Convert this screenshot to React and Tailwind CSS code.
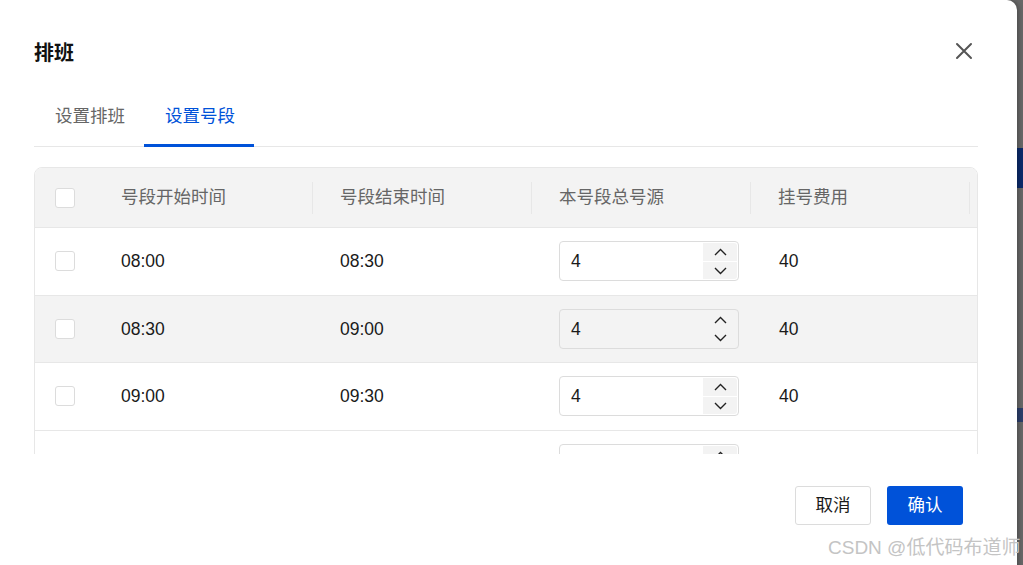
import React from 'react';

const rows = [
  { start: '08:00', end: '08:30', total: 4, fee: 40 },
  { start: '08:30', end: '09:00', total: 4, fee: 40, hover: true },
  { start: '09:00', end: '09:30', total: 4, fee: 40 },
  // last row is clipped by the scroll area, only the input's top shows
  { start: '', end: '', total: '', fee: '' },
];

const Checkbox = () => (
  <span className="block w-[20px] h-[20px] rounded-[3px] border border-[#dcdcdc] bg-white" />
);

const Chevron = ({ up }) => (
  <svg width="13" height="8" viewBox="0 0 13 8" fill="none" stroke="#222" strokeWidth="1.4">
    {up ? <path d="M1 7 L6.5 1.5 L12 7" /> : <path d="M1 1 L6.5 6.5 L12 1" />}
  </svg>
);

const InputNumber = ({ value, hover }) => (
  <div className={`flex w-[180px] h-[40px] rounded-[4px] border border-[#dcdcdc] ${hover ? 'bg-transparent' : 'bg-white'}`}>
    <span className="flex-1 flex items-center pl-[11px]">{value}</span>
    <div className="flex flex-col w-[35px] gap-px py-px pr-px">
      <span className={`flex-1 flex items-center justify-center rounded-tr-[3px] ${hover ? '' : 'bg-[#f3f3f3]'}`}>
        <Chevron up />
      </span>
      <span className={`flex-1 flex items-center justify-center rounded-br-[3px] ${hover ? '' : 'bg-[#f3f3f3]'}`}>
        <Chevron />
      </span>
    </div>
  </div>
);

const HeadCell = ({ children }) => (
  <div className="flex items-center justify-between pl-[20px] pr-[7px]">
    <span>{children}</span>
    <span className="w-px h-[32px] bg-[#e7e7e7]" />
  </div>
);

const cols = 'grid grid-cols-[66px_219px_219px_219px_219px]';

export default function App() {
  return (
    <div
      className="relative flex w-[1023px] h-[565px] overflow-hidden bg-[#686868] text-[17.5px] text-[#1a1a1a]"
      style={{ fontFamily: '"Liberation Sans", Arial, "Noto Sans CJK SC", sans-serif' }}
    >
      {/* dialog */}
      <div className="relative w-[1017px] h-[600px] shrink-0 bg-white rounded-tr-[10px] shadow-[2px_0_4px_rgba(0,0,0,0.25)]">
        {/* title */}
        <div className="flex items-center justify-between pl-[34px] pr-[44px] pt-[39px]">
          <h1 className="text-[20px] leading-[28px] font-bold text-[#111]">排班</h1>
          <svg className="-mt-[4px]" width="18" height="18" viewBox="0 0 18 18" stroke="#555" strokeWidth="2" strokeLinecap="round">
            <path d="M2 2 L16 16 M16 2 L2 16" />
          </svg>
        </div>

        {/* tabs */}
        <div className="mt-[19px] mx-[34px] w-[944px] flex h-[61px] border-b border-[#e7e7e7]">
          <div className="w-[110px] flex items-center pl-[21px] text-[#666]">设置排班</div>
          <div className="relative w-[110px] flex items-center pl-[21px] text-[#0052d9]">
            设置号段
            <span className="absolute left-0 right-0 -bottom-px h-[3px] bg-[#0052d9]" />
          </div>
        </div>

        {/* table, clipped */}
        <div className="h-[307px] overflow-hidden pt-[20px] px-[34px]">
          <div className="w-[944px] border border-[#e7e7e7] rounded-t-[8px] overflow-hidden">
            <div className={`${cols} h-[60px] bg-[#f3f3f3] border-b border-[#e7e7e7] text-[#666]`}>
              <div className="flex items-center pl-[20px]">
                <Checkbox />
              </div>
              <HeadCell>号段开始时间</HeadCell>
              <HeadCell>号段结束时间</HeadCell>
              <HeadCell>本号段总号源</HeadCell>
              <HeadCell>挂号费用</HeadCell>
            </div>
            {rows.map((r, i) => (
              <div
                key={i}
                className={`${cols} h-[67.5px] border-b border-[#e7e7e7] ${r.hover ? 'bg-[#f3f3f3]' : 'bg-white'}`}
              >
                <div className="flex items-center pl-[20px]">
                  <Checkbox />
                </div>
                <div className="flex items-center pl-[20px]">{r.start}</div>
                <div className="flex items-center pl-[20px]">{r.end}</div>
                <div className="flex items-center pl-[20px]">
                  <InputNumber value={r.total} hover={r.hover} />
                </div>
                <div className="flex items-center pl-[21px]">{r.fee}</div>
              </div>
            ))}
          </div>
        </div>

        {/* footer */}
        <div className="flex justify-end gap-[16px] pr-[54px] pt-[32px]">
          <button className="w-[76px] h-[39px] rounded-[3px] border border-[#dcdcdc] bg-white text-[#1a1a1a]">取消</button>
          <button className="w-[76px] h-[39px] rounded-[3px] bg-[#0052d9] text-white">确认</button>
        </div>
      </div>

      {/* backdrop bits */}
      <div className="flex-1 flex flex-col">
        <div className="mt-[148px] h-[40px] bg-[#0b2a6b]" />
        <div className="mt-[220px] h-[14px] bg-[#2c3e6b]" />
      </div>

      {/* watermark */}
      <span className="absolute left-[828px] top-[535px] text-[19px] leading-[26px] text-[#c4c4c4] whitespace-nowrap">
        CSDN @低代码布道师
      </span>
    </div>
  );
}
